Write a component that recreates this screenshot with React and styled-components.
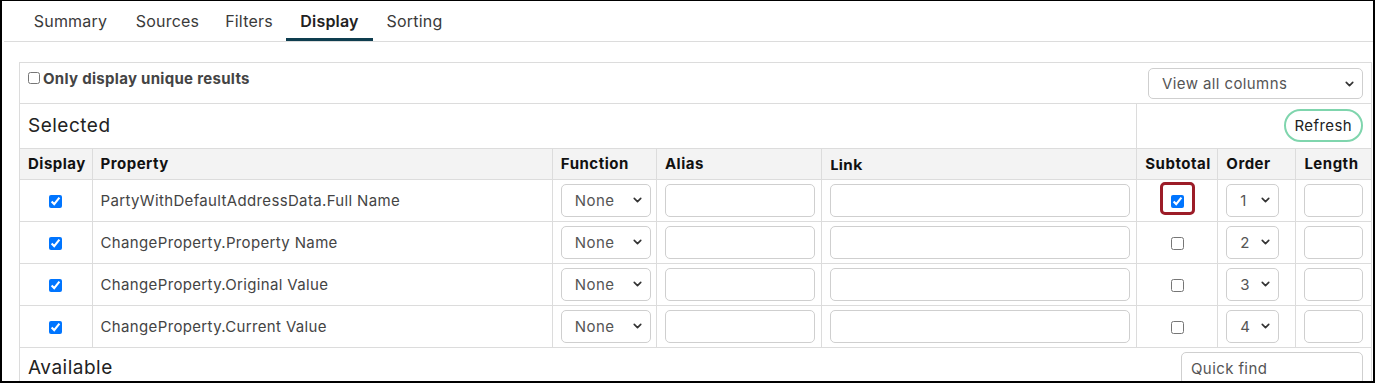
import styled, { createGlobalStyle } from 'styled-components';
import { ChevronDown } from 'lucide-react';

const GlobalStyle = createGlobalStyle`
  * { box-sizing: border-box; }
  body {
    margin: 0;
    background: #fff;
    font-family: Inter, "Noto Sans", sans-serif;
    color: #333;
    letter-spacing: 0.3px;
  }
`;

const Frame = styled.div`
  width: 1375px;
  height: 383px;
  overflow: hidden;
  border: 2px solid #000;
  border-top-width: 1px;
`;

const TabBar = styled.div`
  display: flex;
  margin-left: 2px;
  padding-left: 14px;
  border-bottom: 1px solid #dcdcdc;
`;

const Tab = styled.div`
  width: ${p => p.$w}px;
  height: 40px;
  padding-top: 3px;
  display: flex;
  align-items: center;
  justify-content: center;
  font-size: 16px;
  letter-spacing: 0.2px;
  font-weight: ${p => (p.$active ? 600 : 400)};
  color: ${p => (p.$active ? '#222' : '#3a3a3a')};
  border-bottom: 3px solid ${p => (p.$active ? '#0e3d4f' : 'transparent')};
`;

const Panel = styled.div`
  margin: 20px 1px 0 17px;
  border: 1px solid #dcdcdc;
  border-bottom: none;
`;

const TopRow = styled.div`
  display: flex;
  justify-content: space-between;
  align-items: flex-start;
  padding: 5px 8px 4px 8px;
  border-bottom: 1px solid #dcdcdc;
`;

const CheckLabel = styled.label`
  display: flex;
  align-items: center;
  height: 20px;
  font-size: 15px;
  font-weight: 700;
  color: #444;
  input { margin: 0 3px 0 0; width: 12px; height: 12px; }
`;

const SelectWrap = styled.span`
  position: relative;
  display: inline-block;
  vertical-align: middle;
  width: ${p => p.$w}px;
`;

const Select = styled.select`
  appearance: none;
  width: 100%;
  height: ${p => p.$h || 33}px;
  padding-left: ${p => p.$pl || 13}px;
  border: 1px solid #cfcfcf;
  border-radius: 5px;
  background: #fff;
  font-family: inherit;
  font-size: 15px;
  letter-spacing: 0.4px;
  color: #555;
  outline: none;
`;

const Chevron = styled(ChevronDown)`
  position: absolute;
  right: 7px;
  top: 50%;
  transform: translateY(-50%);
  pointer-events: none;
  color: #333;
`;

const Table = styled.table`
  width: 100%;
  table-layout: fixed;
  border-collapse: collapse;
`;

const Row = styled.tr`
  height: ${p => p.$h}px;
  background: ${p => (p.$head ? '#f3f3f3' : '#fff')};
`;

const Cell = styled.td`
  border-bottom: 1px solid #dcdcdc;
  border-left: 1px solid #dcdcdc;
  padding: 0 8px;
  vertical-align: middle;
  font-size: 15px;
  letter-spacing: 0.35px;
  color: #444;
  white-space: nowrap;
  text-align: ${p => p.$align || 'left'};
  &:first-child { border-left: none; }
`;

const HeadCell = styled.th`
  border-bottom: 1px solid #dcdcdc;
  border-left: 1px solid #dcdcdc;
  padding: 0 8px;
  text-align: left;
  font-size: 15px;
  letter-spacing: ${p => (p.$alt ? '0' : '0.5px')};
  font-weight: 700;
  color: #111;
  font-family: ${p => (p.$alt ? '"Open Sans", sans-serif' : 'inherit')};
  &:first-child { border-left: none; }
`;

const SectionTitle = styled.span`
  font-size: 19px;
  letter-spacing: 0.5px;
  color: #222;
`;

const RefreshButton = styled.button`
  height: 33px;
  padding: 0 9px;
  border: 2px solid #7fd5ad;
  border-radius: 17px;
  background: #fff;
  font-family: inherit;
  font-size: 15px;
  letter-spacing: 0.4px;
  color: #222;
`;

const TextBox = styled.input`
  width: ${p => p.$w}px;
  height: 33px;
  vertical-align: middle;
  border: 1px solid #cfcfcf;
  border-radius: 5px;
  font-family: inherit;
  font-size: 15px;
  letter-spacing: 0.4px;
  padding: 0 9px;
  outline: none;
  &::placeholder { color: #555; }
`;

const Check = styled.input`
  margin: 0;
  width: 13px;
  height: 13px;
  vertical-align: middle;
`;

const Marked = styled.span`
  position: relative;
  display: inline-block;
  line-height: 0;
`;

const MarkBox = styled.span`
  position: absolute;
  left: -11px;
  right: -11px;
  top: -13px;
  bottom: -7px;
  border: 3px solid #9c1c28;
  border-radius: 5px;
`;

const AvailableRow = styled.div`
  display: flex;
  justify-content: space-between;
  padding: 4px 8px 0 8px;
`;

const AvailableTitle = styled(SectionTitle)`
  margin-top: 4px;
`;

const tabs = [
  { label: 'Summary', w: 105 },
  { label: 'Sources', w: 89 },
  { label: 'Filters', w: 74 },
  { label: 'Display', w: 87, active: true },
  { label: 'Sorting', w: 83 },
];

const rows = [
  'PartyWithDefaultAddressData.Full Name',
  'ChangeProperty.Property Name',
  'ChangeProperty.Original Value',
  'ChangeProperty.Current Value',
];

const widths = [72, 460, 104, 165, 315, 81, 78, 75];

function Dropdown({ w, value, options, pl, h }) {
  return (
    <SelectWrap $w={w}>
      <Select $pl={pl} $h={h} defaultValue={value}>
        {options.map(o => <option key={o}>{o}</option>)}
      </Select>
      <Chevron size={13} strokeWidth={3} />
    </SelectWrap>
  );
}

export default function App() {
  return (
    <Frame>
      <GlobalStyle />
      <TabBar>
        {tabs.map(t => (
          <Tab key={t.label} $w={t.w} $active={t.active}>{t.label}</Tab>
        ))}
      </TabBar>
      <Panel>
        <TopRow>
          <CheckLabel>
            <input type="checkbox" />
            Only display unique results
          </CheckLabel>
          <Dropdown w={215} value="View all columns" options={['View all columns']} h={31} />
        </TopRow>
        <Table>
          <colgroup>
            {widths.map((w, i) => <col key={i} style={{ width: w }} />)}
          </colgroup>
          <tbody>
            <Row $h={44}>
              <Cell colSpan={5}><SectionTitle>Selected</SectionTitle></Cell>
              <Cell colSpan={3} $align="right"><RefreshButton>Refresh</RefreshButton></Cell>
            </Row>
            <Row $h={31} $head>
              <HeadCell>Display</HeadCell>
              <HeadCell>Property</HeadCell>
              <HeadCell>Function</HeadCell>
              <HeadCell>Alias</HeadCell>
              <HeadCell $alt>Link</HeadCell>
              <HeadCell>Subtotal</HeadCell>
              <HeadCell>Order</HeadCell>
              <HeadCell>Length</HeadCell>
            </Row>
            {rows.map((name, i) => (
              <Row key={name} $h={42}>
                <Cell $align="center"><Check type="checkbox" defaultChecked /></Cell>
                <Cell>{name}</Cell>
                <Cell><Dropdown w={90} value="None" options={['None', 'Sum', 'Count']} /></Cell>
                <Cell><TextBox $w={150} /></Cell>
                <Cell><TextBox $w={300} /></Cell>
                <Cell $align="center">
                  {i === 0 ? (
                    <Marked>
                      <Check type="checkbox" defaultChecked />
                      <MarkBox />
                    </Marked>
                  ) : (
                    <Check type="checkbox" />
                  )}
                </Cell>
                <Cell>
                  <Dropdown w={53} value={String(i + 1)} options={['1', '2', '3', '4']} />
                </Cell>
                <Cell><TextBox $w={59} /></Cell>
              </Row>
            ))}
          </tbody>
        </Table>
        <AvailableRow>
          <AvailableTitle>Available</AvailableTitle>
          <TextBox $w={182} placeholder="Quick find" />
        </AvailableRow>
      </Panel>
    </Frame>
  );
}
